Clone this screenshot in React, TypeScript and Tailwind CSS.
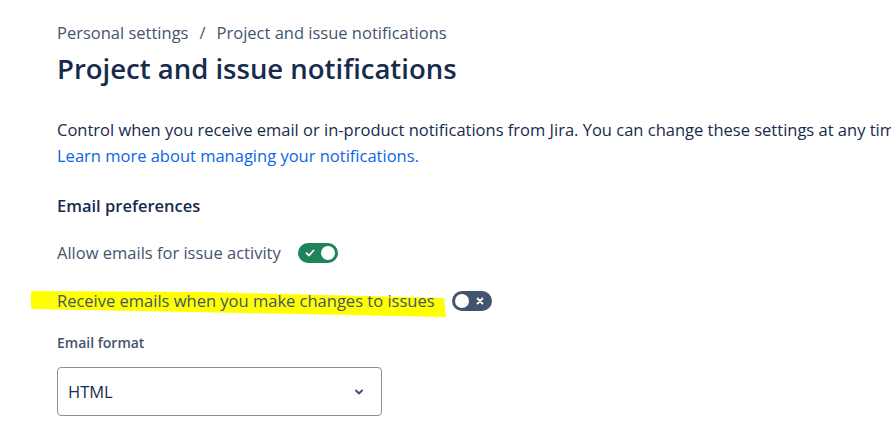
import React from "react";

const Toggle = ({ on }: { on: boolean }) => {
    return (
        <div
            className={`relative flex h-[20px] w-[40px] shrink-0 items-center rounded-full ${on ? "bg-[#1f845a]" : "bg-[#44546f]"}`}
        >
            {on ? (
                <>
                    <svg width="12" height="12" viewBox="0 0 12 12" className="absolute left-[6px]">
                        <path d="M2.5 6.2 L5 8.5 L9.5 3.5" fill="none" stroke="white" strokeWidth="1.8" strokeLinecap="round" strokeLinejoin="round" />
                    </svg>
                    <div className="absolute right-[3px] h-[14px] w-[14px] rounded-full bg-white" />
                </>
            ) : (
                <>
                    <div className="absolute left-[3px] h-[14px] w-[14px] rounded-full bg-white" />
                    <svg width="12" height="12" viewBox="0 0 12 12" className="absolute right-[6px]">
                        <path d="M3.5 3.5 L8.5 8.5 M8.5 3.5 L3.5 8.5" fill="none" stroke="white" strokeWidth="1.8" strokeLinecap="round" />
                    </svg>
                </>
            )}
        </div>
    );
};

export default function App() {
    return (
        <div className="relative min-h-[435px] w-full overflow-hidden bg-white font-['Open_Sans',sans-serif] text-[#172b4d]">
            {/* highlighter stroke */}
            <svg className="pointer-events-none absolute left-0 top-0" width="891" height="435">
                <path d="M31 291 L200 292 L444 298 L446 317 L300 314 L31 309 Z" fill="#ffff00" />
            </svg>

            <div className="relative pl-[57px] pt-[23px]">
                {/* Breadcrumb */}
                <div className="flex items-center gap-[11px] text-[16.5px] leading-[20px] text-[#44546f]">
                    <span>Personal settings</span>
                    <span>/</span>
                    <span>Project and issue notifications</span>
                </div>

                {/* Title */}
                <h1 className="mt-[10px] text-[27.5px] font-semibold leading-[32px] text-[#172b4d]">
                    Project and issue notifications
                </h1>

                {/* Intro */}
                <div className="mt-[32px] text-[16.5px] leading-[26px]">
                    <p className="whitespace-nowrap">
                        Control when you receive email or in-product notifications from Jira. You can change these settings at any time.
                    </p>
                    <a className="font-medium text-[#0c66e4]">Learn more about managing your notifications.</a>
                </div>

                {/* Email preferences */}
                <h2 className="mt-[25px] text-[16.5px] font-semibold leading-[24px]">Email preferences</h2>

                <div className="mt-[23px] flex items-center gap-[17px] text-[16.5px] leading-[24px] text-[#44546f]">
                    <span>Allow emails for issue activity</span>
                    <Toggle on={true} />
                </div>

                <div className="mt-[24px] flex items-center gap-[17px] text-[16.5px] leading-[24px] text-[#44546f]">
                    <span>Receive emails when you make changes to issues</span>
                    <Toggle on={false} />
                </div>

                {/* Email format */}
                <div className="mt-[22px] text-[14px] font-semibold leading-[16px] text-[#44546f]">Email format</div>

                <div className="mt-[16px] flex h-[49px] w-[325px] items-center justify-between rounded-[4px] border border-[#8590a2] pl-[10px] pr-[16px]">
                    <span className="pt-[2px] text-[16.5px] text-[#172b4d]">HTML</span>
                    <svg width="12" height="12" viewBox="0 0 12 12">
                        <path d="M3 4.5 L6 7.5 L9 4.5" fill="none" stroke="#44546f" strokeWidth="2" strokeLinecap="round" strokeLinejoin="round" />
                    </svg>
                </div>
            </div>
        </div>
    );
}
